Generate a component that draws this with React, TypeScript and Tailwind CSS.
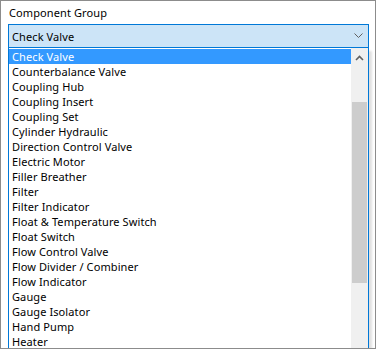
const items = [
  "Check Valve",
  "Counterbalance Valve",
  "Coupling Hub",
  "Coupling Insert",
  "Coupling Set",
  "Cylinder Hydraulic",
  "Direction Control Valve",
  "Electric Motor",
  "Filler Breather",
  "Filter",
  "Filter Indicator",
  "Float & Temperature Switch",
  "Float Switch",
  "Flow Control Valve",
  "Flow Divider / Combiner",
  "Flow Indicator",
  "Gauge",
  "Gauge Isolator",
  "Hand Pump",
  "Heater",
];

export default function App() {
  const selected = 0;

  return (
    <div className="w-[378px] h-[350px] bg-white">
      <div
        className="relative w-[376px] h-[349px] border border-[#8c8c8c] bg-white overflow-hidden text-[11px] tracking-[0.1px] text-black"
        style={{ fontFamily: '"Noto Sans", sans-serif' }}
      >
        {/* Label */}
        <div className="pl-[8px] pt-[4px] h-[23px] leading-[15px]">Component Group</div>

        {/* Combobox */}
        <div className="ml-[7px] w-[361px] h-[24px] border border-[#0078d7] bg-[#cce4f7] flex items-center pl-[3px] pr-[4px]">
          <span className="flex-1 leading-[15px]">Check Valve</span>
          <svg width="9" height="6" viewBox="0 0 9 6" className="mr-[1px]">
            <path d="M0.5 0.5 L4.5 4.5 L8.5 0.5" fill="none" stroke="#606060" strokeWidth="1" />
          </svg>
        </div>

        {/* Dropdown list */}
        <div className="absolute left-[7px] top-[47px] w-[361px] h-[320px] border-x border-[#0078d7] bg-white flex shadow-[3px_3px_2px_rgba(0,0,0,0.12)]">
          <div className="flex-1 pt-[1px]">
            {items.map((item, i) => (
              <div
                key={item}
                className={`h-[15px] leading-[15px] pl-[3px] whitespace-nowrap ${
                  i === selected ? "bg-[#3399ff] text-white" : "text-black"
                }`}
              >
                {item}
              </div>
            ))}
          </div>

          {/* Scrollbar */}
          <div className="w-[17px] bg-[#f0f0f0] pt-[1px] flex flex-col">
            <div className="h-[17px] flex items-center justify-center">
              <svg width="9" height="6" viewBox="0 0 9 6">
                <path d="M1 5 L4.5 1.5 L8 5" fill="none" stroke="#606060" strokeWidth="1.6" />
              </svg>
            </div>
            <div className="h-[36px]" />
            <div className="ml-[1px] w-[15px] h-[181px] bg-[#cdcdcd]" />
          </div>
        </div>
      </div>
    </div>
  );
}
